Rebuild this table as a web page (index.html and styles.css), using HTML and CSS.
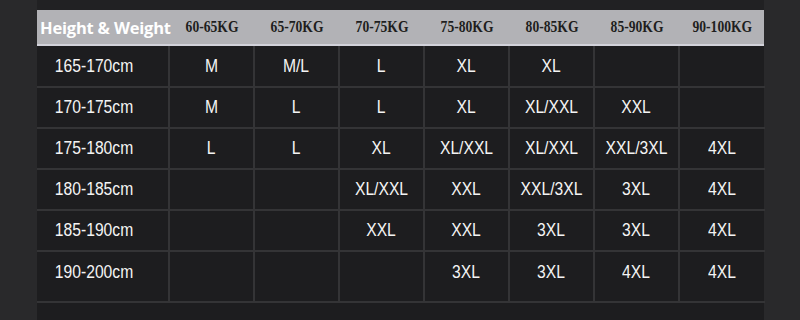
FILE: index.html
```html
<!DOCTYPE html>
<html>
<head>
<meta charset="utf-8">
<link rel="stylesheet" href="styles.css">
</head>
<body>
<div class="panel">
  <div class="head">
    <div class="hcell first">Height &amp; Weight</div>
    <div class="hcell"><span>60-65KG</span></div>
    <div class="hcell"><span>65-70KG</span></div>
    <div class="hcell"><span>70-75KG</span></div>
    <div class="hcell"><span>75-80KG</span></div>
    <div class="hcell"><span>80-85KG</span></div>
    <div class="hcell"><span>85-90KG</span></div>
    <div class="hcell"><span>90-100KG</span></div>
  </div>
  <div class="body">
    <div class="cell label"><span>165-170cm</span></div><div class="cell"><span>M</span></div><div class="cell"><span>M/L</span></div><div class="cell"><span>L</span></div><div class="cell"><span>XL</span></div><div class="cell"><span>XL</span></div><div class="cell"></div><div class="cell"></div>
    <div class="cell label"><span>170-175cm</span></div><div class="cell"><span>M</span></div><div class="cell"><span>L</span></div><div class="cell"><span>L</span></div><div class="cell"><span>XL</span></div><div class="cell"><span>XL/XXL</span></div><div class="cell"><span>XXL</span></div><div class="cell"></div>
    <div class="cell label"><span>175-180cm</span></div><div class="cell"><span>L</span></div><div class="cell"><span>L</span></div><div class="cell"><span>XL</span></div><div class="cell"><span>XL/XXL</span></div><div class="cell"><span>XL/XXL</span></div><div class="cell"><span>XXL/3XL</span></div><div class="cell"><span>4XL</span></div>
    <div class="cell label"><span>180-185cm</span></div><div class="cell"></div><div class="cell"></div><div class="cell"><span>XL/XXL</span></div><div class="cell"><span>XXL</span></div><div class="cell"><span>XXL/3XL</span></div><div class="cell"><span>3XL</span></div><div class="cell"><span>4XL</span></div>
    <div class="cell label"><span>185-190cm</span></div><div class="cell"></div><div class="cell"></div><div class="cell"><span>XXL</span></div><div class="cell"><span>XXL</span></div><div class="cell"><span>3XL</span></div><div class="cell"><span>3XL</span></div><div class="cell"><span>4XL</span></div>
    <div class="cell label last"><span>190-200cm</span></div><div class="cell last"></div><div class="cell last"></div><div class="cell last"></div><div class="cell last"><span>3XL</span></div><div class="cell last"><span>3XL</span></div><div class="cell last"><span>4XL</span></div><div class="cell last"><span>4XL</span></div>
  </div>
</div>
</body>
</html>
```
FILE: styles.css
```css
html, body {
  margin: 0;
  padding: 0;
  background: #29292b;
  width: 800px;
  height: 320px;
  overflow: hidden;
}
.panel {
  margin-left: 37px;
  width: 727px;
  height: 320px;
  background: #1d1d1f;
  border-top: 10px solid #212123;
  box-sizing: border-box;
}
.head {
  display: grid;
  grid-template-columns: 133px repeat(7, 85px);
  height: 36px;
  background: #b2b2b6;
  border-bottom: 2px solid #d2d2da;
  box-sizing: border-box;
}
.hcell {
  display: flex;
  align-items: center;
  justify-content: center;
  font-family: "Liberation Serif", serif;
  font-weight: bold;
  font-size: 17px;
  color: #1e1e20;
  white-space: nowrap;
}
.hcell span {
  display: inline-block;
  transform: scaleX(0.8);
}
.hcell.first {
  justify-content: flex-start;
  padding-left: 3px;
  font-family: "Open Sans", "Liberation Sans", sans-serif;
  font-weight: 700;
  font-size: 16.5px;
  color: #ffffff;
  letter-spacing: -0.2px;
}
.body {
  display: grid;
  grid-template-columns: 133px repeat(7, 85px);
  grid-template-rows: 42px 41px 41px 41px 41px 51px;
}
.cell {
  border-right: 2px solid #343436;
  border-bottom: 2px solid #343436;
  display: flex;
  align-items: center;
  justify-content: center;
  font-family: "Liberation Sans", sans-serif;
  font-size: 18px;
  color: #f4f4f4;
  box-sizing: border-box;
  white-space: nowrap;
}
.cell span {
  display: inline-block;
  transform: scaleX(0.87);
}
.cell:nth-child(8n) {
  border-right: none;
}
.cell.label {
  justify-content: flex-start;
  padding-left: 12px;
}
.cell.last {
  align-items: flex-start;
  padding-top: 10px;
}
```
